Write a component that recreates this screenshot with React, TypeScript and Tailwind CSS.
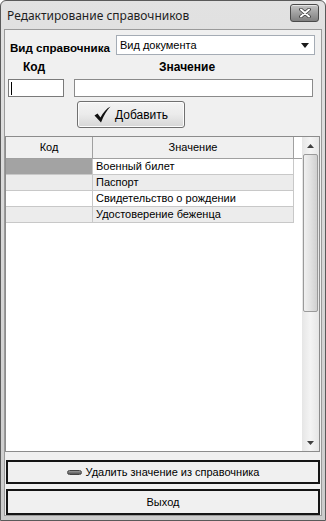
import React from 'react'

const rows = [
  { code: '', value: 'Военный билет', codeBg: 'bg-[#a3a3a3]', valueBg: 'bg-white' },
  { code: '', value: 'Паспорт', codeBg: 'bg-[#ececec]', valueBg: 'bg-[#ececec]' },
  { code: '', value: 'Свидетельство о рождении', codeBg: 'bg-white', valueBg: 'bg-white' },
  { code: '', value: 'Удостоверение беженца', codeBg: 'bg-[#ececec]', valueBg: 'bg-[#ececec]' },
]

const ui = { fontFamily: '"Liberation Sans", Arial, sans-serif' }

const Arrow = ({ up }: { up?: boolean }) => (
  <svg width="7" height="4" viewBox="0 0 7 4">
    {up ? <path d="M0 4 L3.5 0 L7 4 Z" fill="#404040" /> : <path d="M0 0 L7 0 L3.5 4 Z" fill="#404040" />}
  </svg>
)

export default function App() {
  return (
    <div
      className="w-[326px] h-[521px] flex flex-col rounded-t-[6px] border border-[#5a5a5a] bg-gradient-to-b from-[#e2e2e2] via-[#d6d6d6] to-[#cccccc] overflow-hidden"
      style={ui}
    >
      {/* title bar */}
      <div className="h-[28px] flex items-center justify-between pl-[6px] pr-[6px] shrink-0">
        <span className="text-[12px] text-[#1e1e1e] mt-[1px]" style={{ fontFamily: '"Noto Sans", sans-serif' }}>
          Редактирование справочников
        </span>
        <div className="w-[29px] h-[18px] mb-[4px] rounded-[3px] border border-[#4a4a4a] bg-gradient-to-b from-[#c4c4c4] via-[#a0a0a0] to-[#808080] flex items-center justify-center shadow-[inset_0_1px_0_#e6e6e6]">
          <svg width="12" height="10" viewBox="0 0 12 10">
            <path d="M2 1.5 L10 8.5 M10 1.5 L2 8.5" stroke="#3a3a3a" strokeWidth="3.6" strokeLinecap="round" />
            <path d="M2 1.5 L10 8.5 M10 1.5 L2 8.5" stroke="#ffffff" strokeWidth="2" strokeLinecap="round" />
          </svg>
        </div>
      </div>

      {/* client area */}
      <div className="flex-1 mx-[3px] mb-[4px] bg-[#f0f0f0] border border-[#9a9a9a] flex flex-col text-[11px] text-black">
        <div className="flex items-center mt-[5px] h-[20px]">
          <span className="w-[111px] pl-[5px] pt-[6px] font-bold text-[11.6px]">Вид справочника</span>
          <div className="w-[199px] h-[20px] bg-white border border-[#a5acb5] flex items-center justify-between pl-[3px] pr-[5px]">
            <span>Вид документа</span>
            <svg width="8" height="5" viewBox="0 0 8 5">
              <path d="M0 0 L8 0 L4 5 Z" fill="#1a1a1a" />
            </svg>
          </div>
        </div>

        <div className="flex mt-[6px] h-[13px] font-bold text-[12px] leading-[13px]">
          <span className="ml-[18px] w-[136px]">Код</span>
          <span>Значение</span>
        </div>

        <div className="flex mt-[5px] h-[18px]">
          <div className="ml-[3px] w-[56px] h-[18px] bg-white border border-[#7a7a7a] flex items-center pl-[2px]">
            <div className="w-[1px] h-[13px] bg-black" />
          </div>
          <div className="ml-[10px] w-[239px] h-[18px] bg-white border border-[#8a8a8a]" />
        </div>

        <div className="mt-[4px] ml-[72px] w-[108px] h-[27px] rounded-[3px] border border-[#707070] bg-gradient-to-b from-[#f4f4f4] via-[#ebebeb] to-[#d6d6d6] flex items-center justify-center gap-[4px] shadow-[inset_0_0_0_1px_#fcfcfc]">
          <svg width="17" height="17" viewBox="0 0 17 17">
            <path d="M0.5 9.5 L3.5 7.5 L6.5 11.5 C9 6.5 12.5 2.5 16.5 0.5 C13 4 10 9 7 16.5 Z" fill="#111" />
          </svg>
          <span className="text-[12px]">Добавить</span>
        </div>

        {/* grid */}
        <div className="mt-[8px] mr-[1px] h-[316px] bg-white border border-[#8c8c8c] flex">
          <div className="flex-1 flex flex-col">
            <div className="flex h-[22px] border-b border-[#a0a0a0]">
              <div className="w-[87px] bg-[#f0f0f0] border-r border-[#a0a0a0] flex items-center justify-center">Код</div>
              <div className="w-[201px] bg-[#f0f0f0] border-r border-[#a0a0a0] flex items-center justify-center">Значение</div>
            </div>
            {rows.map((r, i) => (
              <div key={i} className="flex h-[16px]">
                <div className={`w-[87px] border-r border-b border-[#c8c8c8] ${r.codeBg}`}>{r.code}</div>
                <div className={`w-[201px] border-r border-b border-[#c8c8c8] pl-[3px] leading-[15px] ${r.valueBg}`}>
                  {r.value}
                </div>
              </div>
            ))}
          </div>

          {/* scrollbar */}
          <div className="w-[17px] bg-gradient-to-r from-[#e6e6e6] via-[#f4f4f4] to-[#e6e6e6] flex flex-col">
            <div className="h-[17px] flex items-center justify-center">
              <Arrow up />
            </div>
            <div className="mx-[1px] h-[158px] rounded-[2px] border border-[#9a9a9a] bg-gradient-to-r from-[#f0f0f0] via-[#e2e2e2] to-[#d0d0d0]" />
            <div className="flex-1" />
            <div className="h-[17px] flex items-center justify-center">
              <Arrow />
            </div>
          </div>
        </div>

        <div className="mt-[8px] ml-[1px] mr-[1px] h-[24px] border-2 border-[#141414] bg-[#f0f0f0] flex items-center justify-center gap-[4px]">
          <div className="w-[15px] h-[5px] rounded-full bg-gradient-to-b from-[#9a9a9a] to-[#555] border border-[#444]" />
          <span className="text-[11px]">Удалить значение из справочника</span>
        </div>

        <div className="mt-[5px] ml-[1px] mr-[1px] h-[26px] border-2 border-[#141414] bg-[#f0f0f0] flex items-center justify-center">
          <span className="text-[11px]">Выход</span>
        </div>
      </div>
    </div>
  )
}
